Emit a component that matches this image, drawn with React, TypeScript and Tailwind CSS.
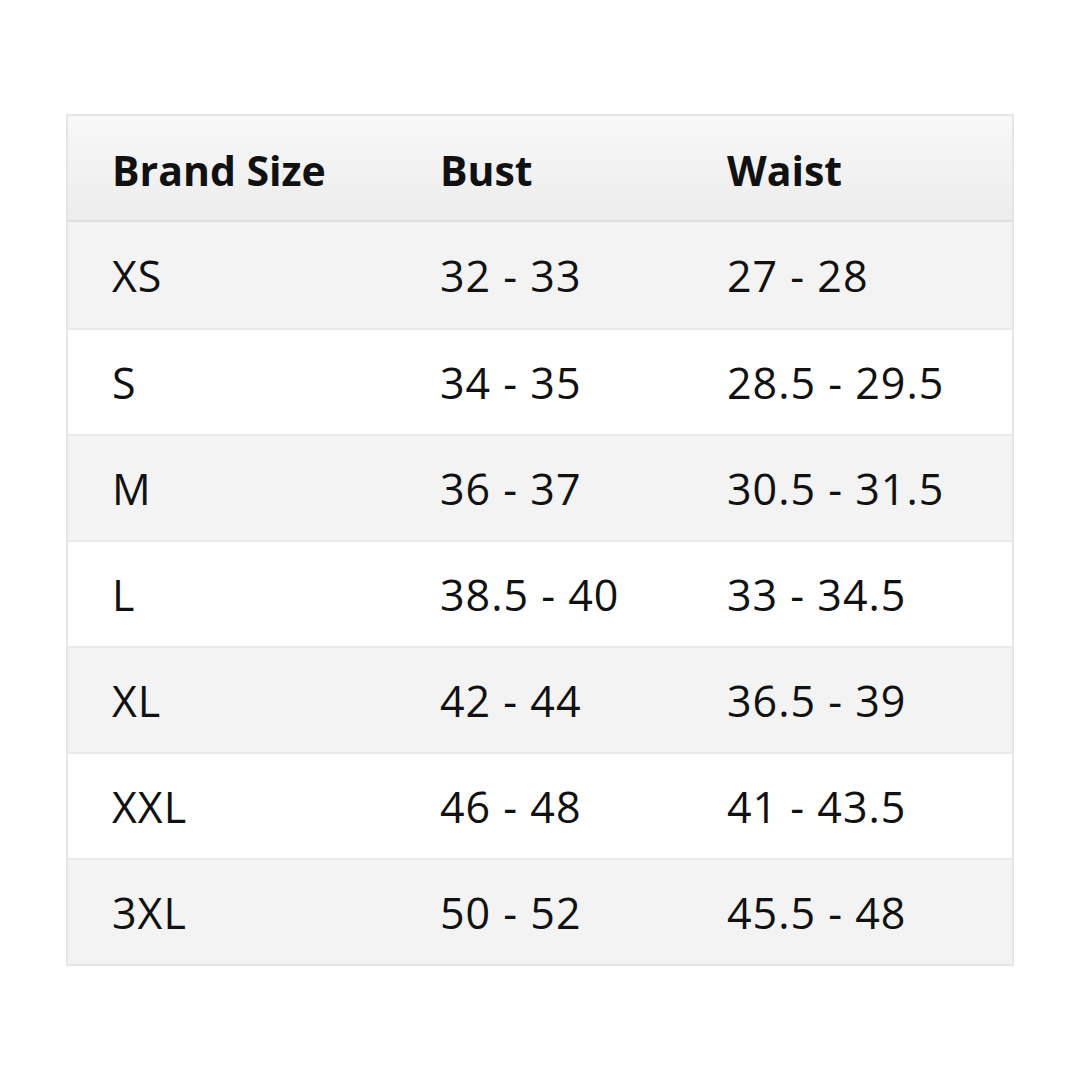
const rows = [
  ['XS', '32 - 33', '27 - 28'],
  ['S', '34 - 35', '28.5 - 29.5'],
  ['M', '36 - 37', '30.5 - 31.5'],
  ['L', '38.5 - 40', '33 - 34.5'],
  ['XL', '42 - 44', '36.5 - 39'],
  ['XXL', '46 - 48', '41 - 43.5'],
  ['3XL', '50 - 52', '45.5 - 48'],
];

export default function App() {
  return (
    <div className="w-[1080px] h-[1080px] bg-white pt-[114px] pl-[66px] font-['Open_Sans',sans-serif] text-[#111111]">
      <div className="w-[948px] border-2 border-[#e6e6e6]">
        {/* header */}
        <div className="grid grid-cols-[328px_287px_1fr] h-[106px] items-center pt-[5px] pl-[44px] bg-gradient-to-b from-[#f8f8f8] to-[#ececec] border-b-2 border-[#dedede] text-[41px] font-bold">
          <div>Brand Size</div>
          <div>Bust</div>
          <div>Waist</div>
        </div>
        {rows.map((r, i) => (
          <div
            key={i}
            className={`grid grid-cols-[328px_287px_1fr] h-[106px] items-center pt-[2px] pl-[44px] text-[43px] tracking-[1px] ${
              i > 0 ? 'border-t-2 border-[#e9e9e9]' : ''
            } ${i % 2 === 0 ? 'bg-[#f3f3f3]' : 'bg-white'}`}
          >
            <div>{r[0]}</div>
            <div>{r[1]}</div>
            <div>{r[2]}</div>
          </div>
        ))}
      </div>
    </div>
  );
}
